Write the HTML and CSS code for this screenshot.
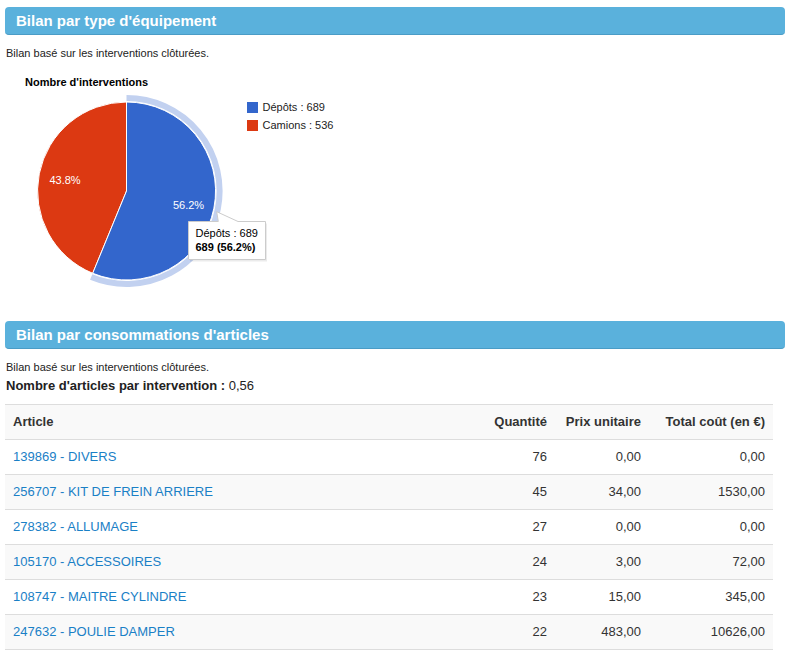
FILE: index.html
```html
<!DOCTYPE html>
<html lang="fr">
<head>
<meta charset="utf-8">
<title>Bilan</title>
<link rel="stylesheet" href="styles.css">
</head>
<body>
<div class="page">
  <h2 class="bar bar-first">Bilan par type d'équipement</h2>
  <p class="note">Bilan basé sur les interventions clôturées.</p>
  <svg class="chart" width="420" height="238" viewBox="0 0 420 238" xmlns="http://www.w3.org/2000/svg">
    <g transform="translate(-5,-62)" font-family="Liberation Sans, Arial, sans-serif" font-size="11">
      <text x="25" y="85.5" font-weight="bold" fill="#000">Nombre d'interventions</text>
      <path d="M126.5 191 L92.7 273.3 A89 89 0 0 1 126.5 102 Z" fill="#dc3912" stroke="#fff" stroke-width="1"/>
      <path d="M126.5 191 L126.5 102 A89 89 0 1 1 92.7 273.3 Z" fill="#3366cc" stroke="#fff" stroke-width="1"/>
      <path d="M126.5 98 A93 93 0 1 1 91.2 277" fill="none" stroke="#c2d1f0" stroke-width="6"/>
      <text x="188.5" y="209" text-anchor="middle" fill="#fff">56.2%</text>
      <text x="65" y="184" text-anchor="middle" fill="#fff">43.8%</text>
      <rect x="247" y="102" width="11" height="11" fill="#3366cc"/>
      <text x="262.5" y="110.5" fill="#222">Dépôts : 689</text>
      <rect x="247" y="120" width="11" height="11" fill="#dc3912"/>
      <text x="262.5" y="129" fill="#222">Camions : 536</text>
      <rect x="190" y="223.5" width="77" height="38" fill="#000" opacity="0.08"/>
      <path d="M188.5 221.5 L218.3 221.5 L216.7 211.7 L238 221.5 L265.5 221.5 L265.5 259.5 L188.5 259.5 Z" fill="#fff" stroke="#cccccc" stroke-width="1"/>
      <text x="195.5" y="237" fill="#000">Dépôts : 689</text>
      <text x="195.5" y="250.5" fill="#000" font-weight="bold">689 (56.2%)</text>
    </g>
  </svg>
  <h2 class="bar">Bilan par consommations d'articles</h2>
  <p class="note">Bilan basé sur les interventions clôturées.</p>
  <p class="ratio"><strong>Nombre d'articles par intervention :</strong> 0,56</p>
  <table class="items">
    <thead>
      <tr><th class="col-article">Article</th><th class="num col-qty">Quantité</th><th class="num col-price">Prix unitaire</th><th class="num col-total">Total coût (en €)</th></tr>
    </thead>
    <tbody>
      <tr><td><a href="#">139869 - DIVERS</a></td><td class="num">76</td><td class="num">0,00</td><td class="num">0,00</td></tr>
      <tr><td><a href="#">256707 - KIT DE FREIN ARRIERE</a></td><td class="num">45</td><td class="num">34,00</td><td class="num">1530,00</td></tr>
      <tr><td><a href="#">278382 - ALLUMAGE</a></td><td class="num">27</td><td class="num">0,00</td><td class="num">0,00</td></tr>
      <tr><td><a href="#">105170 - ACCESSOIRES</a></td><td class="num">24</td><td class="num">3,00</td><td class="num">72,00</td></tr>
      <tr><td><a href="#">108747 - MAITRE CYLINDRE</a></td><td class="num">23</td><td class="num">15,00</td><td class="num">345,00</td></tr>
      <tr><td><a href="#">247632 - POULIE DAMPER</a></td><td class="num">22</td><td class="num">483,00</td><td class="num">10626,00</td></tr>
    </tbody>
  </table>
</div>
</body>
</html>
```

FILE: styles.css
```css
html, body {
  margin: 0;
  padding: 0;
  background: #fff;
}
body {
  font-family: "Liberation Sans", Arial, sans-serif;
  color: #333;
  font-size: 13px;
}
.page {
  padding: 0 6px 0 5px;
}
.bar {
  margin: 21px 0 0 0;
  height: 27px;
  line-height: 27px;
  padding: 0 11px;
  background: #5ab1dc;
  border-bottom: 1px solid #4a9cc6;
  border-radius: 4px;
  color: #fff;
  font-size: 15px;
  font-weight: bold;
}
.bar-first {
  margin-top: 7px;
}
.note {
  margin: 11px 0 0 1px;
  font-size: 11px;
  line-height: 14px;
  color: #222;
}
.chart {
  display: block;
  margin-top: 2px;
}
.ratio {
  margin: 3px 0 0 1px;
  font-size: 13px;
  line-height: 18px;
  color: #222;
}
.items {
  margin-top: 9px;
  width: 768px;
  border-collapse: collapse;
  border-spacing: 0;
  border-bottom: 1px solid #ddd;
}
.items th, .items td {
  padding: 8px;
  line-height: 18px;
  border-top: 1px solid #ddd;
  text-align: left;
  white-space: nowrap;
}
.items th {
  font-weight: bold;
  color: #333;
  background: #f9f9f9;
}
.items tbody tr:nth-child(even) td {
  background: #f9f9f9;
}
.items .num {
  text-align: right;
}
.col-qty { width: 54px; }
.col-price { width: 78px; }
.col-total { width: 108px; }
.items a {
  color: #1a80c6;
  text-decoration: none;
}
```
